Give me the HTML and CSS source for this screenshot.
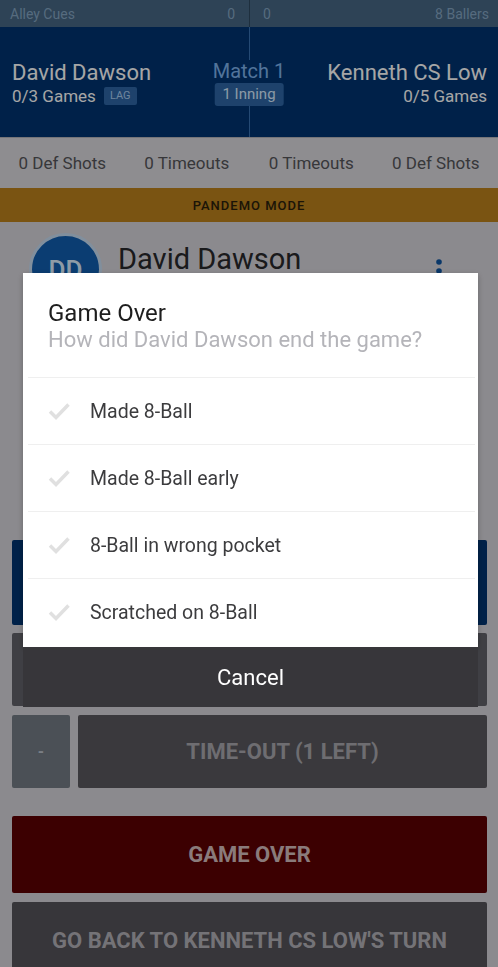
FILE: index.html
```html
<!DOCTYPE html>
<html lang="en">
<head>
<meta charset="utf-8">
<title>Game Over</title>
<link rel="stylesheet" href="styles.css">
</head>
<body>
<div class="app">
  <div class="topbar">
    <div class="team team-left"><span>Alley Cues</span><span>0</span></div>
    <div class="team team-right"><span>0</span><span>8 Ballers</span></div>
  </div>
  <div class="scoreboard">
    <div class="player player-left">
      <div class="pname">David Dawson</div>
      <div class="pgames">0/3 Games <span class="tag">LAG</span></div>
    </div>
    <div class="player player-right">
      <div class="pname">Kenneth CS Low</div>
      <div class="pgames">0/5 Games</div>
    </div>
    <div class="match">
      <div class="match-title">Match 1</div>
      <div class="inning">1 Inning</div>
    </div>
  </div>
  <div class="stats">
    <span>0 Def Shots</span>
    <span>0 Timeouts</span>
    <span>0 Timeouts</span>
    <span>0 Def Shots</span>
  </div>
  <div class="mode">PANDEMO MODE</div>
  <div class="turn">
    <div class="avatar">DD</div>
    <div class="turn-name">David Dawson</div>
    <svg class="kebab" viewBox="0 0 8 26" width="8" height="26" aria-hidden="true">
      <circle cx="4" cy="4" r="2.8"/>
      <circle cx="4" cy="13" r="2.8"/>
      <circle cx="4" cy="22" r="2.8"/>
    </svg>
  </div>
  <div class="controls">
    <button class="btn btn-blue"></button>
    <button class="btn btn-grey"></button>
    <div class="btn-row">
      <button class="btn btn-minus">-</button>
      <button class="btn btn-timeout">TIME-OUT (1 LEFT)</button>
    </div>
    <button class="btn btn-red">GAME OVER</button>
    <button class="btn btn-back">GO BACK TO KENNETH CS LOW'S TURN</button>
  </div>
</div>

<div class="scrim"></div>

<div class="sheet">
  <div class="dialog">
    <div class="dialog-head">
      <div class="dialog-title">Game Over</div>
      <div class="dialog-sub">How did David Dawson end the game?</div>
    </div>
    <ul class="options">
      <li class="option">
        <svg class="check" viewBox="0 0 22 18" width="22" height="18" aria-hidden="true"><polyline points="2,9.5 8,15.5 20.5,2.5"/></svg>
        <span>Made 8-Ball</span>
      </li>
      <li class="option">
        <svg class="check" viewBox="0 0 22 18" width="22" height="18" aria-hidden="true"><polyline points="2,9.5 8,15.5 20.5,2.5"/></svg>
        <span>Made 8-Ball early</span>
      </li>
      <li class="option">
        <svg class="check" viewBox="0 0 22 18" width="22" height="18" aria-hidden="true"><polyline points="2,9.5 8,15.5 20.5,2.5"/></svg>
        <span>8-Ball in wrong pocket</span>
      </li>
      <li class="option">
        <svg class="check" viewBox="0 0 22 18" width="22" height="18" aria-hidden="true"><polyline points="2,9.5 8,15.5 20.5,2.5"/></svg>
        <span>Scratched on 8-Ball</span>
      </li>
    </ul>
  </div>
  <div class="cancel">Cancel</div>
</div>
</body>
</html>
```

FILE: styles.css
```css
* { box-sizing: border-box; }

html, body {
  margin: 0;
  padding: 0;
}

body {
  width: 498px;
  height: 967px;
  overflow: hidden;
  background: #d6d4da;
  font-family: Roboto, "Noto Sans", "Liberation Sans", sans-serif;
}

.app {
  width: 498px;
}

/* top team bar */
.topbar {
  display: grid;
  grid-template-columns: 250px 1fr;
  height: 27px;
  background: #476785;
  color: #84a5c2;
  font-size: 14px;
}

.team {
  display: flex;
  justify-content: space-between;
  align-items: center;
}

.team-left {
  padding: 0 14px 0 10px;
  border-right: 1px solid #2f4960;
}

.team-right {
  padding: 0 9px 0 13px;
}

/* scoreboard */
.scoreboard {
  position: relative;
  display: grid;
  grid-template-columns: 250px 1fr;
  height: 111px;
  background: #003470;
  color: #ffffff;
  border-bottom: 1px solid #b4b4ba;
}

.player {
  padding-top: 33px;
}

.player-left {
  padding-left: 12px;
  border-right: 1px solid #3a72b2;
}

.player-right {
  padding-right: 11px;
  text-align: right;
}

.pname {
  font-size: 22px;
  line-height: 26px;
}

.pgames {
  display: flex;
  align-items: center;
  gap: 8px;
  font-size: 17px;
  line-height: 20px;
}

.player-right .pgames {
  justify-content: flex-end;
}

.tag {
  font-size: 11px;
  line-height: 18px;
  padding: 0 6px;
  background: #2e66a6;
  color: #a9cdf2;
  border-radius: 2px;
}

.match {
  position: absolute;
  top: 33px;
  left: 50%;
  transform: translateX(-50%);
  display: flex;
  flex-direction: column;
  align-items: center;
  background: #003470;
}

.match-title {
  font-size: 20px;
  line-height: 23px;
  color: #7eb2ed;
}

.inning {
  font-size: 15px;
  line-height: 23px;
  padding: 0 8px;
  background: #2e66a6;
  color: #d8ecff;
  border-radius: 3px;
}

/* stats row */
.stats {
  display: grid;
  grid-template-columns: repeat(4, 1fr);
  align-items: center;
  height: 50px;
  background: #dad9de;
  color: #555559;
  font-size: 17px;
  text-align: center;
}

.mode {
  display: flex;
  align-items: center;
  justify-content: center;
  height: 34px;
  background: #bc811c;
  color: #2b1f0c;
  font-size: 13px;
  font-weight: 500;
  letter-spacing: 1px;
}

/* current turn row */
.turn {
  display: flex;
  align-items: flex-start;
  height: 86px;
  padding: 11px 0 0 29px;
}

.avatar {
  width: 73px;
  height: 73px;
  border-radius: 50%;
  border: 3px solid #c6dcf2;
  background: #115eaf;
  color: #dcefff;
  font-size: 26px;
  font-weight: 500;
  display: flex;
  align-items: center;
  justify-content: center;
}

.turn-name {
  margin: 10px 0 0 16px;
  font-size: 29px;
  line-height: 33px;
  color: #28282b;
}

.kebab {
  margin: 25px 55px 0 auto;
  fill: #0f55a1;
}

/* action buttons */
.controls {
  display: flex;
  flex-direction: column;
  margin-top: 232px;
  padding: 0 11px 0 12px;
}

.btn {
  border: 0;
  border-radius: 2px;
  padding: 0;
  font-family: Roboto, "Noto Sans", "Liberation Sans", sans-serif;
  font-size: 22px;
  font-weight: 700;
  display: flex;
  align-items: center;
  justify-content: center;
}

.btn-blue {
  height: 85px;
  background: #003470;
}

.btn-grey {
  height: 73px;
  margin-top: 8px;
  background: #626269;
}

.btn-row {
  display: flex;
  gap: 8px;
  height: 73px;
  margin-top: 9px;
}

.btn-minus {
  width: 58px;
  background: #737b84;
  color: #bcc3cd;
  font-size: 16px;
}

.btn-timeout {
  flex: 1;
  background: #59585e;
  color: #a9a8ae;
}

.btn-red {
  height: 77px;
  margin-top: 28px;
  background: #5c0003;
  color: #d4bdbd;
}

.btn-back {
  height: 77px;
  margin-top: 9px;
  background: #555359;
  color: #b2b1b7;
}

/* modal */
.scrim {
  position: fixed;
  inset: 0;
  background: rgba(0, 0, 0, 0.35);
}

.sheet {
  position: fixed;
  top: 273px;
  left: 23px;
  width: 455px;
}

.dialog {
  background: #ffffff;
  padding-bottom: 2px;
  box-shadow: 0 2px 6px rgba(0, 0, 0, 0.25);
}

.dialog-head {
  padding: 26px 20px 24px 25px;
}

.dialog-title {
  font-size: 24px;
  line-height: 28px;
  color: #1e1e1e;
}

.dialog-sub {
  font-size: 22px;
  line-height: 26px;
  color: #b4b4b9;
}

.options {
  list-style: none;
  margin: 0;
  padding: 0;
}

.option {
  display: flex;
  align-items: center;
  gap: 20px;
  height: 67px;
  margin: 0 3px 0 5px;
  padding-left: 20px;
  border-top: 1px solid #efefef;
  font-size: 19.5px;
  color: #3c3c3e;
}

.check {
  flex: none;
  fill: none;
  stroke: #e0e0e0;
  stroke-width: 3.5;
}

.cancel {
  height: 60px;
  display: flex;
  align-items: center;
  justify-content: center;
  background: #37363a;
  color: #ffffff;
  font-size: 22px;
}
```
